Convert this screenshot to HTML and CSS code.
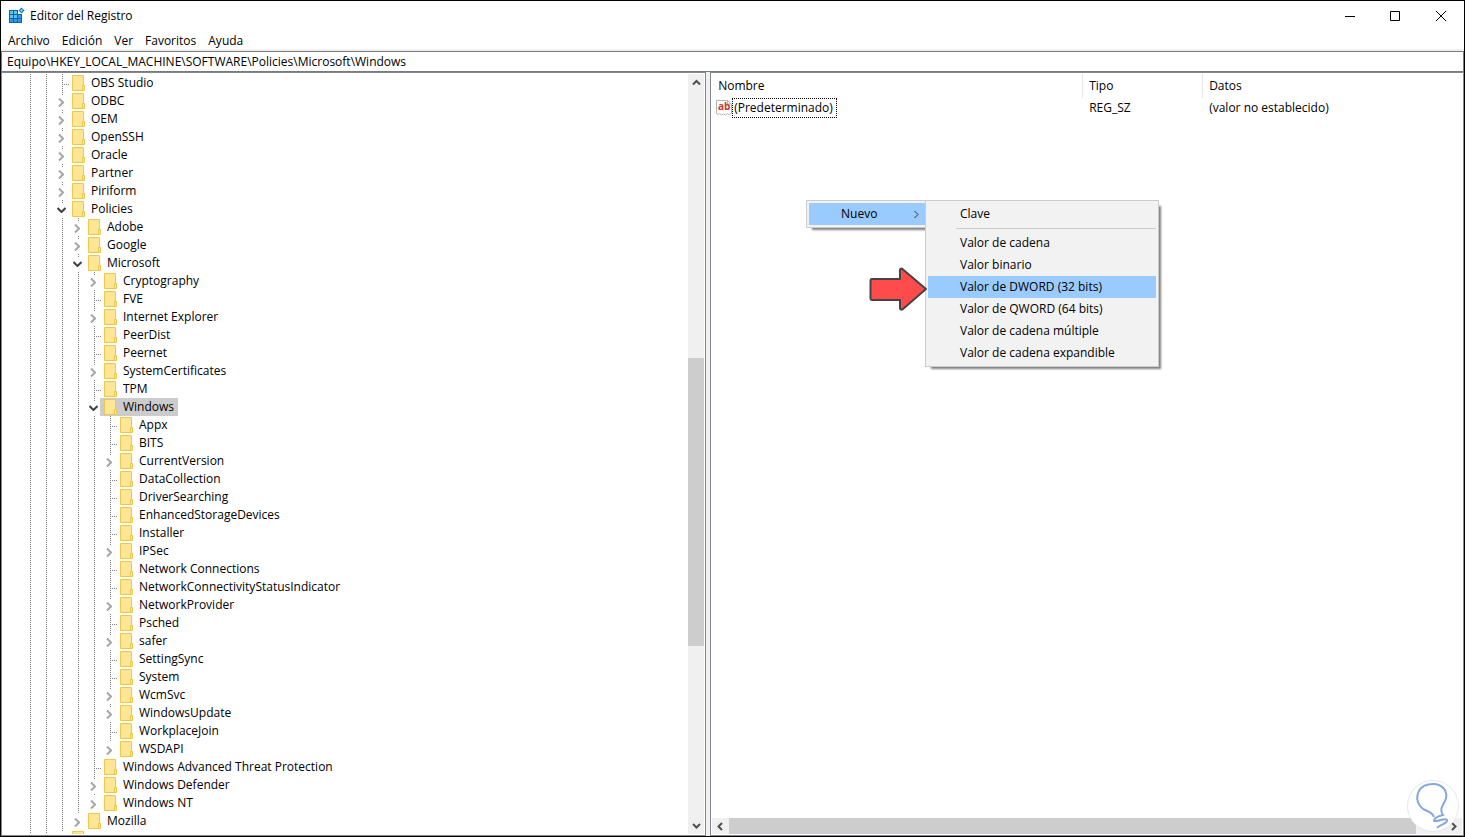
FILE: index.html
```html
<!DOCTYPE html>
<html lang="es">
<head>
  <meta charset="UTF-8">
  <meta name="viewport" content="width=device-width, initial-scale=1.0">
  <title>Editor del Registro</title>
  <link rel="stylesheet" href="styles.css">
</head>
<body>

  <div class="window">

    <!-- Title bar -->
    <header class="titlebar">
      <svg class="app-icon" width="16" height="16" viewBox="0 0 16 16">
        <path d="M0 2h9v4h4v9H0z" fill="#0f62ad"/>
        <g fill="#5cc3f5">
          <rect x="1" y="3" width="3" height="3"/><rect x="5" y="3" width="3" height="3"/>
          <rect x="1" y="7" width="3" height="3"/><rect x="5" y="7" width="3" height="3"/>
        </g>
        <g fill="#2f9ae0">
          <rect x="9" y="7" width="3" height="3"/>
          <rect x="1" y="11" width="3" height="3"/><rect x="5" y="11" width="3" height="3"/><rect x="9" y="11" width="3" height="3"/>
        </g>
        <path d="M12.5 -.5L15.5 2.5 12.5 5.5 9.5 2.5z" fill="#1a78bd"/>
        <path d="M12.5 1L14 2.5 12.5 4 11 2.5z" fill="#7ad4ff"/>
      </svg>
      <h1 class="title">Editor del Registro</h1>
      <div class="window-buttons">
        <button type="button" aria-label="Minimizar"><svg width="11" height="11" viewBox="0 0 11 11"><path d="M1 5.5h10"/></svg></button>
        <button type="button" aria-label="Maximizar"><svg width="11" height="11" viewBox="0 0 11 11"><path d="M.5.5h9v9h-9z"/></svg></button>
        <button type="button" aria-label="Cerrar"><svg width="11" height="11" viewBox="0 0 11 11"><path d="M0 0l10 10M10 0L0 10"/></svg></button>
      </div>
    </header>

    <!-- Menu bar -->
    <nav class="menubar">
      <button type="button">Archivo</button>
      <button type="button">Edición</button>
      <button type="button">Ver</button>
      <button type="button">Favoritos</button>
      <button type="button">Ayuda</button>
    </nav>

    <input class="address" type="text" aria-label="Ruta" value="Equipo\HKEY_LOCAL_MACHINE\SOFTWARE\Policies\Microsoft\Windows">

    <main class="panes">

      <!-- Key tree -->
      <section class="pane tree-pane">
        <div class="tree-view">
          <ul class="tree" id="tree"></ul>
        </div>
        <div class="scrollbar vertical">
          <button type="button" aria-label="Subir"><svg width="9" height="9" viewBox="0 0 9 9"><path d="M1 6.5L4.5 3 8 6.5"/></svg></button>
          <div class="track"><div class="before"></div><div class="thumb"></div><div class="after"></div></div>
          <button type="button" aria-label="Bajar"><svg width="9" height="9" viewBox="0 0 9 9"><path d="M1 3l3.5 3.5L8 3"/></svg></button>
        </div>
      </section>

      <!-- Values -->
      <section class="pane values-pane">
        <div class="values-view">
          <table class="values">
            <thead>
              <tr><th class="col-name">Nombre</th><th class="col-type">Tipo</th><th>Datos</th></tr>
            </thead>
            <tbody>
              <tr>
                <td>
                  <div class="value-name">
                    <svg width="16" height="16" viewBox="0 0 16 16">
                      <path d="M.5.5h11l4 3.5v9l-2 2-2-1.5-2 1.5-2-1-2 1-2-1.5-1.5 1-1.5-1z" fill="#fff" stroke="#b4b4b4"/>
                      <path d="M11.5.5v3.5h4" fill="none" stroke="#b4b4b4"/>
                      <text x="2" y="10">ab</text>
                    </svg>
                    <span class="focused">(Predeterminado)</span>
                  </div>
                </td>
                <td>REG_SZ</td>
                <td>(valor no establecido)</td>
              </tr>
            </tbody>
          </table>
        </div>
        <div class="scrollbar horizontal">
          <button type="button" aria-label="Izquierda"><svg width="9" height="9" viewBox="0 0 9 9"><path d="M6 1L2.5 4.5 6 8"/></svg></button>
          <div class="track"><div class="thumb"></div><div class="after"></div></div>
          <button type="button" aria-label="Derecha"><svg width="9" height="9" viewBox="0 0 9 9"><path d="M3 1l3.5 3.5L3 8"/></svg></button>
        </div>
      </section>
    </main>

    <!-- Context menu -->
    <div class="menu context-menu">
      <button type="button" class="active">Nuevo
        <svg width="6" height="9" viewBox="0 0 6 9"><path d="M1.5 1L5 4.5 1.5 8"/></svg>
      </button>
    </div>
    <div class="menu submenu">
      <button type="button">Clave</button>
      <hr>
      <button type="button">Valor de cadena</button>
      <button type="button">Valor binario</button>
      <button type="button" class="active">Valor de DWORD (32 bits)</button>
      <button type="button">Valor de QWORD (64 bits)</button>
      <button type="button">Valor de cadena múltiple</button>
      <button type="button">Valor de cadena expandible</button>
    </div>

    <svg class="pointer" width="60" height="46" viewBox="0 0 60 46">
      <path d="M3 13h28V3.5q1-2 3 0L57 23 34 43q-2 1.5-3-.5V34H3q-1.5 0-1.5-2V15q0-2 1.5-2z" fill="#ff4b4b" stroke="#444" stroke-width="2" stroke-linejoin="round"/>
    </svg>

    <svg class="watermark" width="54" height="54" viewBox="0 0 54 54">
      <circle cx="27" cy="27" r="25.5" fill="#fff" stroke="#e3e8f3"/>
      <path d="M28 38C25 30 19 34 14 27C8 18 12 5 27 5C37 5 43 13 39 22C35 29 34 32 37 36C33 37 28 39 28 42C33 43 38 38 41 41C42 45 34 45 31 49" fill="none" stroke="#84a8d8" stroke-width="2"/>
    </svg>
  </div>

  <script src="tree.js"></script>
</body>
</html>
```

FILE: tree.js
```js
// Registry keys. closed = has subkeys, children = expanded
const keys = [
  { name: "OBS Studio" },
  { name: "ODBC", closed: true },
  { name: "OEM", closed: true },
  { name: "OpenSSH", closed: true },
  { name: "Oracle", closed: true },
  { name: "Partner", closed: true },
  { name: "Piriform", closed: true },
  { name: "Policies", children: [
    { name: "Adobe", closed: true },
    { name: "Google", closed: true },
    { name: "Microsoft", children: [
      { name: "Cryptography", closed: true },
      { name: "FVE" },
      { name: "Internet Explorer", closed: true },
      { name: "PeerDist" },
      { name: "Peernet" },
      { name: "SystemCertificates", closed: true },
      { name: "TPM" },
      { name: "Windows", selected: true, children: [
        { name: "Appx" },
        { name: "BITS" },
        { name: "CurrentVersion", closed: true },
        { name: "DataCollection" },
        { name: "DriverSearching" },
        { name: "EnhancedStorageDevices" },
        { name: "Installer" },
        { name: "IPSec", closed: true },
        { name: "Network Connections" },
        { name: "NetworkConnectivityStatusIndicator" },
        { name: "NetworkProvider", closed: true },
        { name: "Psched" },
        { name: "safer", closed: true },
        { name: "SettingSync" },
        { name: "System" },
        { name: "WcmSvc", closed: true },
        { name: "WindowsUpdate", closed: true },
        { name: "WorkplaceJoin" },
        { name: "WSDAPI", closed: true }
      ] },
      { name: "Windows Advanced Threat Protection" },
      { name: "Windows Defender", closed: true },
      { name: "Windows NT", closed: true }
    ] },
    { name: "Mozilla", closed: true }
  ] },
  { name: "" }
];

const folder = '<svg class="folder" width="13" height="16" viewBox="0 0 13 16">' +
  '<path d="M.5.5h11v10h1v5H.5z" fill="#ffe694" stroke="#edc84c"/>' +
  '<path d="M10.5 15v-4.5h2" fill="none" stroke="#edc84c"/></svg>';
const right = '<svg width="6" height="9" viewBox="0 0 6 9"><path d="M1 .5l4 4-4 4"/></svg>';
const down = '<svg width="9" height="6" viewBox="0 0 9 6"><path d="M.5 1l4 4 4-4"/></svg>';

function addKeys(list, items) {
  items.forEach(item => {
    const li = document.createElement("li");
    const row = document.createElement("div");
    row.className = "row";
    if (item.closed || item.children) {
      const cls = item.children ? "toggle open" : "toggle";
      row.innerHTML = `<button type="button" class="${cls}" aria-label="${item.name}">${item.children ? down : right}</button>`;
    } else {
      row.classList.add("leaf");
    }
    const label = document.createElement("span");
    label.className = item.selected ? "key selected" : "key";
    label.innerHTML = folder + item.name;
    row.appendChild(label);
    li.appendChild(row);
    if (item.children) {
      const ul = document.createElement("ul");
      addKeys(ul, item.children);
      li.appendChild(ul);
    }
    list.appendChild(li);
  });
}

addKeys(document.getElementById("tree"), keys);
```

FILE: styles.css
```css
* {
  box-sizing: border-box;
}
body {
  margin: 0;
  font-family: "Open Sans", "Noto Sans", sans-serif;
  font-size: 12px;
  line-height: 18px;
  color: #000;
}
button {
  padding: 0;
  border: 0;
  background: none;
  font: inherit;
  color: inherit;
}
svg {
  display: block;
  flex: none;
}
.window {
  position: relative;
  display: flex;
  flex-direction: column;
  height: 100vh;
  border: 1px solid #000;
  background: #fff;
  overflow: hidden;
}

/* Title bar */
.titlebar {
  display: flex;
  align-items: center;
  height: 30px;
  padding-left: 8px;
}
.title {
  flex: 1;
  margin: 0 0 0 5px;
  font-size: 12px;
  font-weight: normal;
}
.window-buttons {
  display: flex;
}
.window-buttons button {
  display: flex;
  align-items: center;
  justify-content: center;
  width: 46px;
  height: 30px;
}
.window-buttons svg {
  fill: none;
  stroke: #000;
}
.app-icon {
  overflow: visible;
}

/* Menu bar */
.menubar {
  display: flex;
  gap: 12px;
  height: 20px;
  padding: 1px 0 0 7px;
  border-bottom: 2px solid #f0f0f0;
}
.address {
  height: 21px;
  padding: 0 5px;
  border: 1px solid #7a7a7a;
  font: inherit;
  outline: 0;
}

/* Panes */
.panes {
  flex: 1;
  display: flex;
  gap: 4px;
  min-height: 0;
  background: #f0f0f0;
}
.pane {
  display: flex;
  min-width: 0;
  border: 1px solid #828790;
  background: #fff;
}
.tree-pane {
  width: 48.2%;
  padding: 1px 1px 1px 0;
}
.values-pane {
  flex: 1;
  flex-direction: column;
  padding: 1px;
}

/* Tree */
.tree-view {
  flex: 1;
  overflow: hidden;
}
.tree,
.tree ul {
  margin: 0;
  padding: 0;
  list-style: none;
}
.tree {
  padding-left: 52px;
  background:
    repeating-linear-gradient(#808080 0 1px, transparent 1px 2px) 28px 0 / 1px 100% no-repeat,
    repeating-linear-gradient(#808080 0 1px, transparent 1px 2px) 44px 0 / 1px 100% no-repeat;
}
.tree ul {
  padding-left: 16px;
}
.tree li {
  background: repeating-linear-gradient(#808080 0 1px, transparent 1px 2px) 8px 0 / 1px 100% no-repeat;
}
.tree li:last-child {
  background-size: 1px 2px;
}
.row {
  display: flex;
  height: 18px;
  white-space: nowrap;
}
.leaf {
  padding-left: 14px;
  background: repeating-linear-gradient(90deg, #808080 0 1px, transparent 1px 2px) 8px 10px / 8px 1px no-repeat;
}
.toggle {
  display: flex;
  align-items: center;
  justify-content: center;
  width: 14px;
  height: 14px;
  margin-top: 3px;
  background: #fff;
}
.toggle svg {
  fill: none;
  stroke: #a6a6a6;
  stroke-width: 2;
}
.toggle.open svg {
  stroke: #404040;
}
.key {
  display: flex;
  align-items: center;
  gap: 6px;
  padding: 0 4px;
}
.selected {
  background: #ccc;
}

/* Scrollbars */
.scrollbar {
  display: flex;
  background: #f0f0f0;
}
.scrollbar button {
  display: flex;
  align-items: center;
  justify-content: center;
  width: 16px;
  height: 17px;
}
.scrollbar svg {
  fill: none;
  stroke: #505050;
  stroke-width: 2;
}
.scrollbar .track {
  flex: 1;
  display: flex;
}
.vertical,
.vertical .track {
  flex-direction: column;
}
.thumb {
  background: #cdcdcd;
}
.vertical .before {
  flex: 267;
}
.vertical .thumb {
  flex: 289;
}
.vertical .after {
  flex: 171;
}
.horizontal .thumb {
  flex: 96;
}
.horizontal .after {
  flex: 4;
}
.horizontal button {
  width: 17px;
  height: 16px;
}

/* Values table */
.values-view {
  flex: 1;
}
.values {
  width: 100%;
  table-layout: fixed;
  border-spacing: 0;
}
.values th {
  height: 24px;
  padding: 0 6px;
  border-right: 1px solid #e5e5e5;
  font-weight: normal;
  text-align: left;
}
.values th:last-child {
  border-right: 0;
}
.values td {
  height: 20px;
  padding: 0 6px;
}
.col-name {
  width: 371px;
}
.col-type {
  width: 120px;
}
.values td:first-child {
  padding-left: 4px;
}
.value-name {
  display: flex;
  align-items: center;
}
.value-name svg {
  overflow: visible;
}
.value-name text {
  font: bold 10px "Open Sans", sans-serif;
  fill: #c8372d;
}
.focused {
  padding: 0 3px 0 1px;
  border: 1px dotted #000;
}

/* Menus */
.menu {
  position: absolute;
  display: flex;
  flex-direction: column;
  padding: 2px;
  border: 1px solid #ccc;
  background: #f2f2f2;
  box-shadow: 4px 4px 2px -2px #808080;
}
.menu button {
  display: flex;
  align-items: center;
  justify-content: space-between;
  height: 22px;
  padding: 0 6px 0 32px;
}
.menu .active {
  background: #99cbff;
}
.menu svg {
  fill: none;
  stroke: #333;
}
.menu hr {
  width: 200px;
  margin: 3px 0 3px 28px;
  border: 0;
  border-top: 1px solid #ccc;
}
.context-menu {
  left: 805px;
  top: 199px;
  width: 122px;
}
.submenu {
  left: 924px;
  top: 199px;
  width: 234px;
}
.pointer {
  position: absolute;
  left: 868px;
  top: 265px;
}
.watermark {
  position: absolute;
  right: 4px;
  bottom: 3px;
}
```
